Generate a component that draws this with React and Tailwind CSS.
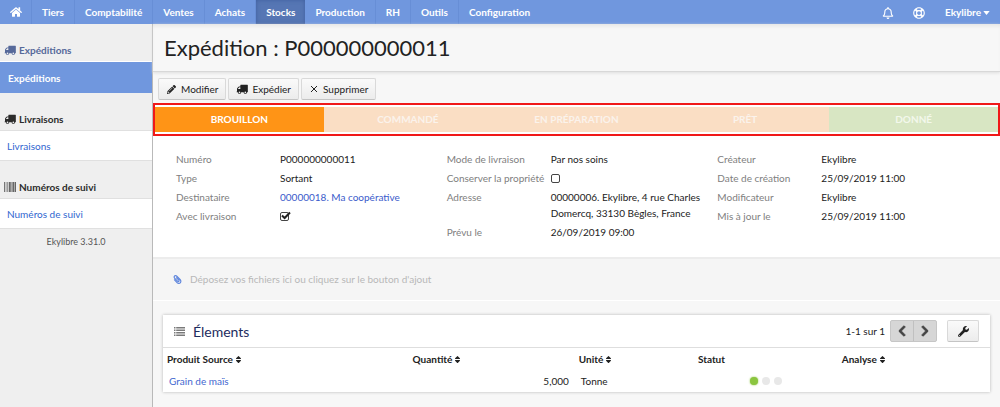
import { FaHome, FaPencilAlt, FaRegBell, FaRegLifeRing, FaPaperclip, FaChevronLeft, FaChevronRight, FaWrench, FaSort } from "react-icons/fa";

const modules = ["Tiers", "Comptabilité", "Ventes", "Achats", "Stocks", "Production", "RH", "Outils", "Configuration"];

function Truck() {
  return (
    <svg viewBox="0 128 1792 1536" aria-hidden="true" className="h-[10px] w-3 shrink-0 fill-current">
      <path d="M640 1408q0-52-38-90t-90-38-90 38-38 90 38 90 90 38 90-38 38-90zm-384-512h384v-256h-158q-13 0-22 9l-195 195q-9 9-9 22v30zm1280 512q0-52-38-90t-90-38-90 38-38 90 38 90 90 38 90-38 38-90zm256-1088v1024q0 15-4 26.5t-13.5 18.5-16.5 11.5-23.5 6-22.5 2-25.5 0-22.5-.5q0 106-75 181t-181 75-181-75-75-181h-384q0 106-75 181t-181 75-181-75-75-181h-64q-3 0-22.5.5t-25.5 0-22.5-2-23.5-6-16.5-11.5-13.5-18.5-4-26.5q0-26 19-45t45-19v-320q0-8-.5-35t0-38 2.5-34.5 6.5-37 14-30.5 22.5-30l198-198q19-19 50.5-32t58.5-13h160v-192q0-26 19-45t45-19h1024q26 0 45 19t19 45z" />
    </svg>
  );
}

function Barcode() {
  return (
    <svg viewBox="0 0 12 10" aria-hidden="true" className="h-[10px] w-3 shrink-0 fill-[#444]">
      <path d="M0 0h.7v10H0zM1.8 0h.5v10h-.5zM3.3 0h.5v10h-.5zM4.8 0h1v10h-1zM6.4 0h.9v10h-.9zM7.9 0h.4v10h-.4zM8.8 0h1v10h-1zM10.3 0h.4v10h-.4zM11.2 0h.8v10h-.8z" />
    </svg>
  );
}

function ListIcon() {
  return (
    <svg viewBox="0 0 11 9" aria-hidden="true" className="h-[9px] w-[11px] shrink-0 fill-[#7a7a7a]">
      <path d="M0 0h1.5v1.5H0zM2.2 0H11v1.5H2.2zM0 2.5h1.5V4H0zM2.2 2.5H11V4H2.2zM0 5h1.5v1.5H0zM2.2 5H11v1.5H2.2zM0 7.5h1.5V9H0zM2.2 7.5H11V9H2.2z" />
    </svg>
  );
}

function Cross() {
  return (
    <svg viewBox="0 0 8 8" aria-hidden="true" className="mx-px size-2 shrink-0 fill-none stroke-[#222] stroke-1">
      <path d="M1 1l6 6M7 1l-6 6" />
    </svg>
  );
}

function NavBar() {
  return (
    <nav className="flex h-6 items-stretch bg-[#7097de] text-[10px] font-bold text-white">
      <a href="#" aria-label="Accueil" className="flex w-8 items-center justify-center border-r border-[#678ed6]">
        <FaHome className="size-3" />
      </a>
      {modules.map((name) => (
        <a
          key={name}
          href="#"
          className={
            name === "Stocks"
              ? "flex items-center bg-[#5676b4] px-[10px] pt-px shadow-[inset_0_0_4px_#3f5f9f]"
              : "flex items-center border-r border-[#678ed6] px-[10px] pt-px last-of-type:border-r-0"
          }
        >
          {name}
        </a>
      ))}
      <div className="ml-auto flex items-center pt-px pr-[10px]">
        <button type="button" aria-label="Notifications" className="mr-[19px]"><FaRegBell className="size-3" /></button>
        <button type="button" aria-label="Aide" className="mr-5"><FaRegLifeRing className="size-3" /></button>
        <button type="button" className="flex items-center gap-0.5 font-bold">
          Ekylibre
          <svg viewBox="0 0 8 5" aria-hidden="true" className="h-1 w-[7px] fill-current"><path d="M0 0h8L4 5z" /></svg>
        </button>
      </div>
    </nav>
  );
}

function SideGroup({ icon, title, active }) {
  return (
    <section>
      <h2 className={`flex h-[38px] items-end gap-[3px] border-b pb-[3px] pl-1 text-[10px] font-bold ${active ? "border-white text-[#56699a]" : "border-[#e0e0e0] text-[#2b2b2b]"}`}>
        <span className="flex h-4 items-center">{icon}</span>
        <span className="leading-4">{title}</span>
      </h2>
      <a
        href="#"
        className={
          active
            ? "flex h-[31px] items-center bg-[#7097de] pt-px pl-2 text-[10px] font-bold text-white"
            : "flex h-[30px] items-center border-b border-[#e0e0e0] bg-white pt-px pl-[7px] text-[10px] text-[#2f66d0]"
        }
      >
        {title}
      </a>
    </section>
  );
}

function ToolButton({ icon, children }) {
  return (
    <button type="button" className="flex h-[22px] items-center gap-1 rounded-xs border border-[#d9d9d9] border-b-[#c4c4c4] bg-linear-to-b from-[#fafafa] to-[#ececec] px-[7px] text-[10px] text-[#222]">
      {icon}
      {children}
    </button>
  );
}

const steps = [
  ["BROUILLON", "bg-[#ff9416] text-white"],
  ["COMMANDÉ", "bg-[#fadec4] text-[#fbf3ec]"],
  ["EN PRÉPARATION", "bg-[#fadec4] text-[#fbf3ec]"],
  ["PRÊT", "bg-[#fadec4] text-[#fbf3ec]"],
  ["DONNÉ", "bg-[#d8e6c3] text-[#f3f8ec]"],
];

function Field({ label, children }) {
  return (
    <div className="flex text-[10px] leading-4">
      <dt className="w-[104px] shrink-0 whitespace-nowrap text-[#808080]">{label}</dt>
      <dd className="text-[#222]">{children}</dd>
    </div>
  );
}

function Check({ label, checked }) {
  return (
    <span className="relative flex h-4 w-3 items-center">
      <input type="checkbox" aria-label={label} defaultChecked={checked} className="peer size-[9px] appearance-none rounded-xs border border-[#444]" />
      <svg viewBox="0 0 12 12" aria-hidden="true" className="pointer-events-none absolute top-[2px] left-0 hidden size-3 fill-none stroke-[#222] stroke-2 peer-checked:block">
        <path d="M2 5.5 4.6 8 10 2.5" />
      </svg>
    </span>
  );
}

function SortHead({ children }) {
  return (
    <button type="button" className="inline-flex items-center gap-px font-bold">
      {children}
      <FaSort className="size-[9px]" />
    </button>
  );
}

export default function App() {
  return (
    <div className="flex min-h-screen flex-col bg-[#f7f7f7] font-['Lato',sans-serif] text-[#222]">
      <NavBar />
      <div className="flex flex-1">
        <aside className="w-[153px] shrink-0 border-r border-[#b9b9b9] bg-[#efefef]">
          <SideGroup active title="Expéditions" icon={<Truck />} />
          <SideGroup title="Livraisons" icon={<Truck />} />
          <SideGroup title="Numéros de suivi" icon={<Barcode />} />
          <p className="pt-[5px] text-center text-[9px] leading-4 text-[#555]">Ekylibre 3.31.0</p>
        </aside>
        <main className="flex min-w-0 flex-1 flex-col">
          <header className="flex h-12 items-center border-b border-[#d8d8d8] px-[11px] pt-px shadow-[0_1px_3px_#dddddd,inset_0_4px_4px_-2px_#e4e4e4]">
            <h1 className="text-[22px] leading-8">Expédition : P000000000011</h1>
          </header>
          <div className="flex gap-[2px] px-[5px] pt-[6px] pb-[3px]">
            <ToolButton icon={<FaPencilAlt className="mx-px size-[9px]" />}>Modifier</ToolButton>
            <ToolButton icon={<Truck />}>Expédier</ToolButton>
            <ToolButton icon={<Cross />}>Supprimer</ToolButton>
          </div>
          <ol className="grid h-[33px] grid-cols-5 border-2 border-[#f01818] bg-white py-[2px] text-[10px] font-bold">
            {steps.map(([name, tone]) => (
              <li key={name} className={`flex items-center justify-center ${tone}`}>{name}</li>
            ))}
          </ol>
          <div className="grid grid-cols-3 border-b-2 border-[#ececec] bg-white pt-[15px] pr-[12px] pb-[17px] pl-[23px]">
            <dl className="flex flex-col gap-[3px]">
              <Field label="Numéro">P000000000011</Field>
              <Field label="Type">Sortant</Field>
              <Field label="Destinataire"><a href="#" className="text-[#3a5bcb]">00000018. Ma coopérative</a></Field>
              <Field label="Avec livraison"><Check label="Avec livraison" checked /></Field>
            </dl>
            <dl className="flex flex-col gap-[3px]">
              <Field label="Mode de livraison">Par nos soins</Field>
              <Field label="Conserver la propriété"><Check label="Conserver la propriété" /></Field>
              <Field label="Adresse">00000006. Ekylibre, 4 rue Charles Domercq, 33130 Bègles, France</Field>
              <Field label="Prévu le">26/09/2019 09:00</Field>
            </dl>
            <dl className="flex flex-col gap-[3px]">
              <Field label="Créateur">Ekylibre</Field>
              <Field label="Date de création">25/09/2019 11:00</Field>
              <Field label="Modificateur">Ekylibre</Field>
              <Field label="Mis à jour le">25/09/2019 11:00</Field>
            </dl>
          </div>
          <div className="flex h-[42px] items-center gap-2 border-b border-white bg-[#f5f5f5] pl-5 text-[10px] text-[#b8b8b8]">
            <FaPaperclip className="size-[9px] -scale-x-100 text-[#5b83dc]" />
            Déposez vos fichiers ici ou cliquez sur le bouton d'ajout
          </div>
          <section className="mx-[10px] mt-[14px] bg-white shadow-[0_0_3px_#b5b5b5]">
            <div className="flex h-[33px] items-center border-b border-[#dedede] px-[11px]">
              <ListIcon />
              <h2 className="ml-2 text-[14px] text-[#1d2c5e]">Élements</h2>
              <span className="mr-[5px] ml-auto text-[10px]">1-1 sur 1</span>
              <div className="flex rounded-xs border border-[#c6c6c6] bg-[#d6d6d6] text-[#444]">
                <button type="button" aria-label="Page précédente" className="flex h-5 w-[23px] items-center justify-center border-r border-[#c0c0c0]"><FaChevronLeft className="size-3 stroke-[40] stroke-current" /></button>
                <button type="button" aria-label="Page suivante" className="flex h-5 w-[22px] items-center justify-center"><FaChevronRight className="size-3 stroke-[40] stroke-current" /></button>
              </div>
              <button type="button" aria-label="Réglages" className="ml-[10px] flex h-[22px] w-8 items-center justify-center rounded-xs border border-[#d9d9d9] border-b-[#c4c4c4] bg-linear-to-b from-[#fafafa] to-[#ececec]"><FaWrench className="size-[11px]" /></button>
            </div>
            <table className="w-full table-fixed text-[10px] leading-4">
              <colgroup>
                <col className="w-[29.7%]" />
                <col className="w-[20.1%]" />
                <col className="w-[14.4%]" />
                <col className="w-[17.4%]" />
                <col />
              </colgroup>
              <thead>
                <tr className="h-[22px] text-left">
                  <th className="px-1"><SortHead>Produit Source</SortHead></th>
                  <th className="px-1"><SortHead>Quantité</SortHead></th>
                  <th className="px-1"><SortHead>Unité</SortHead></th>
                  <th className="px-1">Statut</th>
                  <th className="px-1"><SortHead>Analyse</SortHead></th>
                </tr>
              </thead>
              <tbody>
                <tr className="h-[22px]">
                  <td className="px-[6px]"><a href="#" className="text-[#3f67cf]">Grain de maïs</a></td>
                  <td className="px-[6px] text-right">5,000</td>
                  <td className="px-[6px]">Tonne</td>
                  <td>
                    <div className="flex justify-center gap-1">
                      <span className="size-2 rounded-full bg-[#8bc53f] shadow-[0_0_2px_#8bc53f]" />
                      <span className="size-2 rounded-full bg-[#e8e8e8]" />
                      <span className="size-2 rounded-full bg-[#e8e8e8]" />
                    </div>
                  </td>
                  <td />
                </tr>
              </tbody>
            </table>
          </section>
        </main>
      </div>
    </div>
  );
}
